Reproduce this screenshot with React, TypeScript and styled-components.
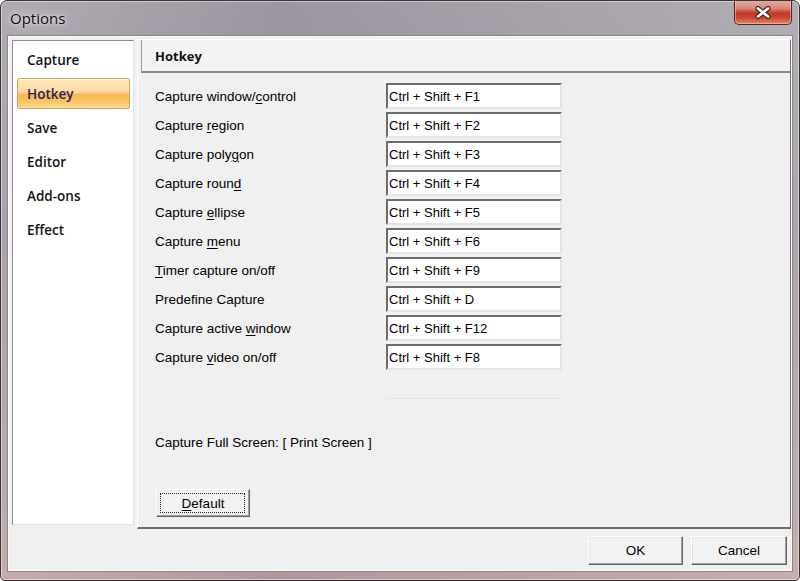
import { Fragment, ReactNode } from 'react';
import styled, { createGlobalStyle } from 'styled-components';

const GlobalStyle = createGlobalStyle`
  html,
  body {
    margin: 0;
    padding: 0;
    width: 800px;
    height: 581px;
    overflow: hidden;
    background: #ffffff;
    font-family: 'Liberation Sans', Arial, sans-serif;
  }
  * {
    box-sizing: border-box;
  }
`;

const Window = styled.div`
  width: 800px;
  height: 581px;
  display: flex;
  flex-direction: column;
  border: 1px solid #3a3536;
  border-radius: 7px 7px 5px 5px;
  background:
    linear-gradient(90deg, rgba(255, 255, 255, 0.08) 0%, rgba(60, 50, 70, 0.12) 35%, rgba(255, 255, 255, 0.1) 100%),
    linear-gradient(180deg, #aaa4ad 0%, #a39ba6 40%, #b3a3a6 80%, #c0a6a3 100%);
  box-shadow: inset 0 0 0 1px rgba(255, 255, 255, 0.45);
  overflow: hidden;
`;

const TitleBar = styled.div`
  height: 35px;
  display: flex;
  align-items: flex-start;
  padding-left: 9px;
`;

const Title = styled.span`
  margin-top: 7px;
  font-family: 'Open Sans', 'Noto Sans', sans-serif;
  font-size: 15px;
  color: #0c0c14;
  text-shadow: 0 0 8px rgba(255, 255, 255, 0.9), 0 0 3px rgba(255, 255, 255, 0.7);
`;

const CloseButton = styled.div`
  margin-left: auto;
  margin-right: 7px;
  margin-top: -1px;
  width: 58px;
  height: 25px;
  display: flex;
  align-items: center;
  justify-content: center;
  border: 1px solid #4d2a26;
  border-top: none;
  border-radius: 0 0 5px 5px;
  background: linear-gradient(180deg, #e3b0a6 0%, #d7877a 35%, #c2371f 55%, #c94a30 75%, #e6866c 100%);
  box-shadow: inset 0 0 0 1px rgba(255, 220, 210, 0.45);
`;

const Client = styled.div`
  flex: 1;
  margin: 0 7px 9px 7px;
  display: flex;
  flex-direction: column;
  padding: 2px 0 0 3px;
  background: #f0f0f0;
  border: 1px solid #fbfbfb;
  box-shadow: 0 0 0 1px #8d8489;
`;

const MainRow = styled.div`
  display: flex;
  align-items: flex-start;
  gap: 3px;
`;

const Sidebar = styled.div`
  width: 122px;
  height: 485px;
  margin-top: 1px;
  padding: 3px 3px 0 4px;
  display: flex;
  flex-direction: column;
  gap: 3px;
  background: #ffffff;
  border: 1px solid;
  border-color: #8e8e8e #e3e3e3 #e3e3e3 #8e8e8e;
`;

const NavItem = styled.div<{ $active?: boolean }>`
  height: 31px;
  display: flex;
  align-items: center;
  padding-left: 9px;
  font-family: 'Open Sans', 'Noto Sans', sans-serif;
  font-size: 13.5px;
  font-weight: 600;
  border-radius: 2px;
  border: 1px solid ${(p) => (p.$active ? '#d3a35a' : 'transparent')};
  color: ${(p) => (p.$active ? '#2a1f5e' : '#141414')};
  background: ${(p) =>
    p.$active
      ? 'linear-gradient(180deg, #fee8bd 0%, #fdd9a0 45%, #f8b84e 55%, #f9c567 80%, #fcdc97 100%)'
      : 'transparent'};
  box-shadow: ${(p) => (p.$active ? 'inset 0 1px 0 rgba(255,255,255,0.7)' : 'none')};
`;

const Panel = styled.div`
  flex: 1;
  height: 490px;
  padding-left: 3px;
  display: flex;
  flex-direction: column;
  border-top: 1px solid #ffffff;
  border-left: 1px solid #ffffff;
  border-right: 1px solid #6e6e6e;
  border-bottom: 2px solid #6e6e6e;
`;

const PanelHeader = styled.div`
  height: 33px;
  display: flex;
  align-items: center;
  padding-left: 13px;
  background: #f3f3f3;
  border-left: 1px solid #9c9c9c;
  border-bottom: 2px solid #8a8a8a;
  font-family: 'Open Sans', 'Noto Sans', sans-serif;
  font-size: 13px;
  font-weight: 700;
  color: #111;
`;

const HotkeyGrid = styled.div`
  margin-top: 10px;
  padding-left: 14px;
  display: grid;
  grid-template-columns: 231px 176px;
  grid-auto-rows: 26px;
  row-gap: 3px;
  align-items: center;
`;

const Label = styled.span`
  font-size: 13.5px;
  color: #000;
  white-space: nowrap;
`;

const AccessKey = styled.u`
  text-decoration: underline;
  text-underline-offset: 2px;
  text-decoration-thickness: 1px;
`;

const HotkeyBox = styled.div`
  height: 26px;
  width: 176px;
  display: flex;
  align-items: center;
  padding-left: 1px;
  background: #ffffff;
  border: 2px solid;
  border-color: #6c6c6c #e4e4e4 #e4e4e4 #6c6c6c;
  font-size: 13px;
  color: #000;
`;

const Separator = styled.div`
  margin: 28px 0 0 246px;
  width: 176px;
  height: 1px;
  background: #e3e3e3;
`;

const FullScreenText = styled.div`
  margin: 36px 0 0 14px;
  height: 16px;
  line-height: 16px;
  font-size: 13.5px;
  color: #000;
`;

const ClassicButton = styled.div<{ $w: number; $h?: number; $focus?: boolean }>`
  position: relative;
  width: ${(p) => p.$w}px;
  height: ${(p) => p.$h ?? 29}px;
  display: flex;
  align-items: center;
  justify-content: center;
  background: #f2f2f2;
  border: 1px solid;
  border-color: #ffffff #646464 #646464 #ffffff;
  box-shadow: inset -1px -1px 0 #a0a0a0, inset 1px 1px 0 #e6e6e6;
  font-size: 13.5px;
  color: #000;

  &::after {
    content: '';
    display: ${(p) => (p.$focus ? 'block' : 'none')};
    position: absolute;
    inset: 3px 4px 3px 3px;
    border: 1px dotted #222;
  }
`;

const DefaultWrap = styled.div`
  margin: 38px 0 0 15px;
`;

const Footer = styled.div`
  margin-top: 7px;
  padding-right: 4px;
  display: flex;
  justify-content: flex-end;
  gap: 8px;
`;

type Hotkey = {
  label: ReactNode;
  keys: string;
};

const hotkeys: Hotkey[] = [
  { label: <>Capture window/<AccessKey>c</AccessKey>ontrol</>, keys: 'Ctrl + Shift + F1' },
  { label: <>Capture <AccessKey>r</AccessKey>egion</>, keys: 'Ctrl + Shift + F2' },
  { label: <>Capture poly<AccessKey>g</AccessKey>on</>, keys: 'Ctrl + Shift + F3' },
  { label: <>Capture roun<AccessKey>d</AccessKey></>, keys: 'Ctrl + Shift + F4' },
  { label: <>Capture <AccessKey>e</AccessKey>llipse</>, keys: 'Ctrl + Shift + F5' },
  { label: <>Capture <AccessKey>m</AccessKey>enu</>, keys: 'Ctrl + Shift + F6' },
  { label: <><AccessKey>T</AccessKey>imer capture on/off</>, keys: 'Ctrl + Shift + F9' },
  { label: <>Predefine Capture</>, keys: 'Ctrl + Shift + D' },
  { label: <>Capture active <AccessKey>w</AccessKey>indow</>, keys: 'Ctrl + Shift + F12' },
  { label: <>Capture <AccessKey>v</AccessKey>ideo on/off</>, keys: 'Ctrl + Shift + F8' },
];

const navItems = ['Capture', 'Hotkey', 'Save', 'Editor', 'Add-ons', 'Effect'];

const CloseIcon = () => (
  <svg width="18" height="13" viewBox="0 0 18 13">
    <path d="M4 2.5 L14 10.5 M14 2.5 L4 10.5" stroke="#3a2420" strokeWidth="5" strokeLinecap="round" />
    <path d="M4 2.5 L14 10.5 M14 2.5 L4 10.5" stroke="#ffffff" strokeWidth="2.8" strokeLinecap="round" />
  </svg>
);

const App = () => {
  return (
    <>
      <GlobalStyle />
      <Window>
        <TitleBar>
          <Title>Options</Title>
          <CloseButton>
            <CloseIcon />
          </CloseButton>
        </TitleBar>
        <Client>
          <MainRow>
            <Sidebar>
              {navItems.map((item) => (
                <NavItem key={item} $active={item === 'Hotkey'}>
                  {item}
                </NavItem>
              ))}
            </Sidebar>
            <Panel>
              <PanelHeader>Hotkey</PanelHeader>
              <HotkeyGrid>
                {hotkeys.map((h) => (
                  <Fragment key={h.keys}>
                    <Label>{h.label}</Label>
                    <HotkeyBox>{h.keys}</HotkeyBox>
                  </Fragment>
                ))}
              </HotkeyGrid>
              <Separator />
              <FullScreenText>Capture Full Screen: [ Print Screen ]</FullScreenText>
              <DefaultWrap>
                <ClassicButton $w={94} $h={28} $focus>
                  <span>
                    <AccessKey>D</AccessKey>efault
                  </span>
                </ClassicButton>
              </DefaultWrap>
            </Panel>
          </MainRow>
          <Footer>
            <ClassicButton $w={95}>OK</ClassicButton>
            <ClassicButton $w={96}>Cancel</ClassicButton>
          </Footer>
        </Client>
      </Window>
    </>
  );
};

export default App;
